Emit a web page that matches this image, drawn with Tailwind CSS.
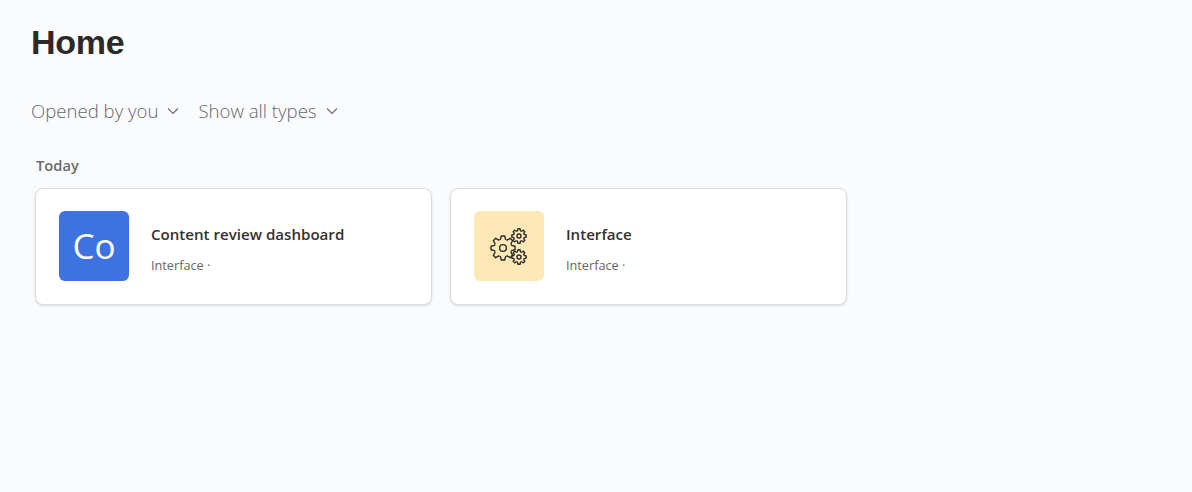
<!DOCTYPE html>
<html lang="en">
<head>
    <meta charset="UTF-8">
    <meta name="viewport" content="width=device-width, initial-scale=1.0">
    <title>Home</title>
    <script src="https://cdn.jsdelivr.net/npm/@tailwindcss/browser@4"></script>
</head>
<body class="min-h-screen bg-[#fafbfd] font-['Open_Sans',sans-serif] overflow-hidden">
    <svg width="0" height="0" class="absolute">
        <defs>
            <g id="gear">
                <path id="tooth" d="M-3.44 -8.31L-2.6 -8.6L-1.7 -12L1.7 -12L2.6 -8.6L3.44 -8.31"/>
                <use href="#tooth" transform="rotate(45)"/>
                <use href="#tooth" transform="rotate(90)"/>
                <use href="#tooth" transform="rotate(135)"/>
                <use href="#tooth" transform="rotate(180)"/>
                <use href="#tooth" transform="rotate(225)"/>
                <use href="#tooth" transform="rotate(270)"/>
                <use href="#tooth" transform="rotate(315)"/>
                <circle r="3.4"/>
            </g>
        </defs>
    </svg>

    <div class="pl-[31px] pt-[20px]">
        <h1 class="text-[34px] leading-[44px] font-bold text-[#2b2a29] font-['Liberation_Sans',sans-serif] tracking-[-0.3px]">Home</h1>

        <div class="flex items-center gap-[19px] mt-[33px] h-[28px] text-[18.6px] font-light text-[#66666c]">
            <button class="flex items-center gap-[9px]">
                <span>Opened by you</span>
                <svg width="12" height="12" viewBox="0 0 12 12" fill="none" stroke="#6f6f75" stroke-width="1.2"><path d="M1 3.5L6 8.5L11 3.5"/></svg>
            </button>
            <button class="flex items-center gap-[9px]">
                <span>Show all types</span>
                <svg width="12" height="12" viewBox="0 0 12 12" fill="none" stroke="#6f6f75" stroke-width="1.2"><path d="M1 3.5L6 8.5L11 3.5"/></svg>
            </button>
        </div>

        <div class="pl-[4px] mt-[30px]">
            <h2 class="pl-px text-[14.7px] leading-[20px] font-semibold text-[#6b6b6f]">Today</h2>

            <div class="flex gap-[18px] mt-[13px]">
                <div class="flex items-center w-[397px] h-[117px] bg-white border border-[#dcdde2] rounded-[8px] shadow-sm pl-[23px]">
                    <div class="flex items-center justify-center w-[70px] h-[70px] mb-px rounded-[6px] bg-[#3e72e0] text-white text-[35px]">Co</div>
                    <div class="ml-[22px] pt-[6px]">
                        <div class="text-[15.1px] leading-[20px] font-semibold text-[#323130]">Content review dashboard</div>
                        <div class="mt-[11px] text-[12.7px] leading-[20px] text-[#66666a]">Interface ·</div>
                    </div>
                </div>

                <div class="flex items-center w-[397px] h-[117px] bg-white border border-[#dcdde2] rounded-[8px] shadow-sm pl-[23px]">
                    <div class="flex items-center justify-center w-[70px] h-[70px] mb-px rounded-[6px] bg-[#fde8b6]">
                        <svg width="70" height="70" viewBox="0 0 70 70" fill="none" stroke="#2b2a29" stroke-linejoin="round">
                            <use href="#gear" transform="translate(29 37)" stroke-width="1.4"/>
                            <use href="#gear" transform="translate(45 25) scale(0.6)" stroke-width="2.3"/>
                            <use href="#gear" transform="translate(45 46) scale(0.6)" stroke-width="2.3"/>
                        </svg>
                    </div>
                    <div class="ml-[22px] pt-[6px]">
                        <div class="text-[15.1px] leading-[20px] font-semibold text-[#323130]">Interface</div>
                        <div class="mt-[11px] text-[12.7px] leading-[20px] text-[#66666a]">Interface ·</div>
                    </div>
                </div>
            </div>
        </div>
    </div>
</body>
</html>
